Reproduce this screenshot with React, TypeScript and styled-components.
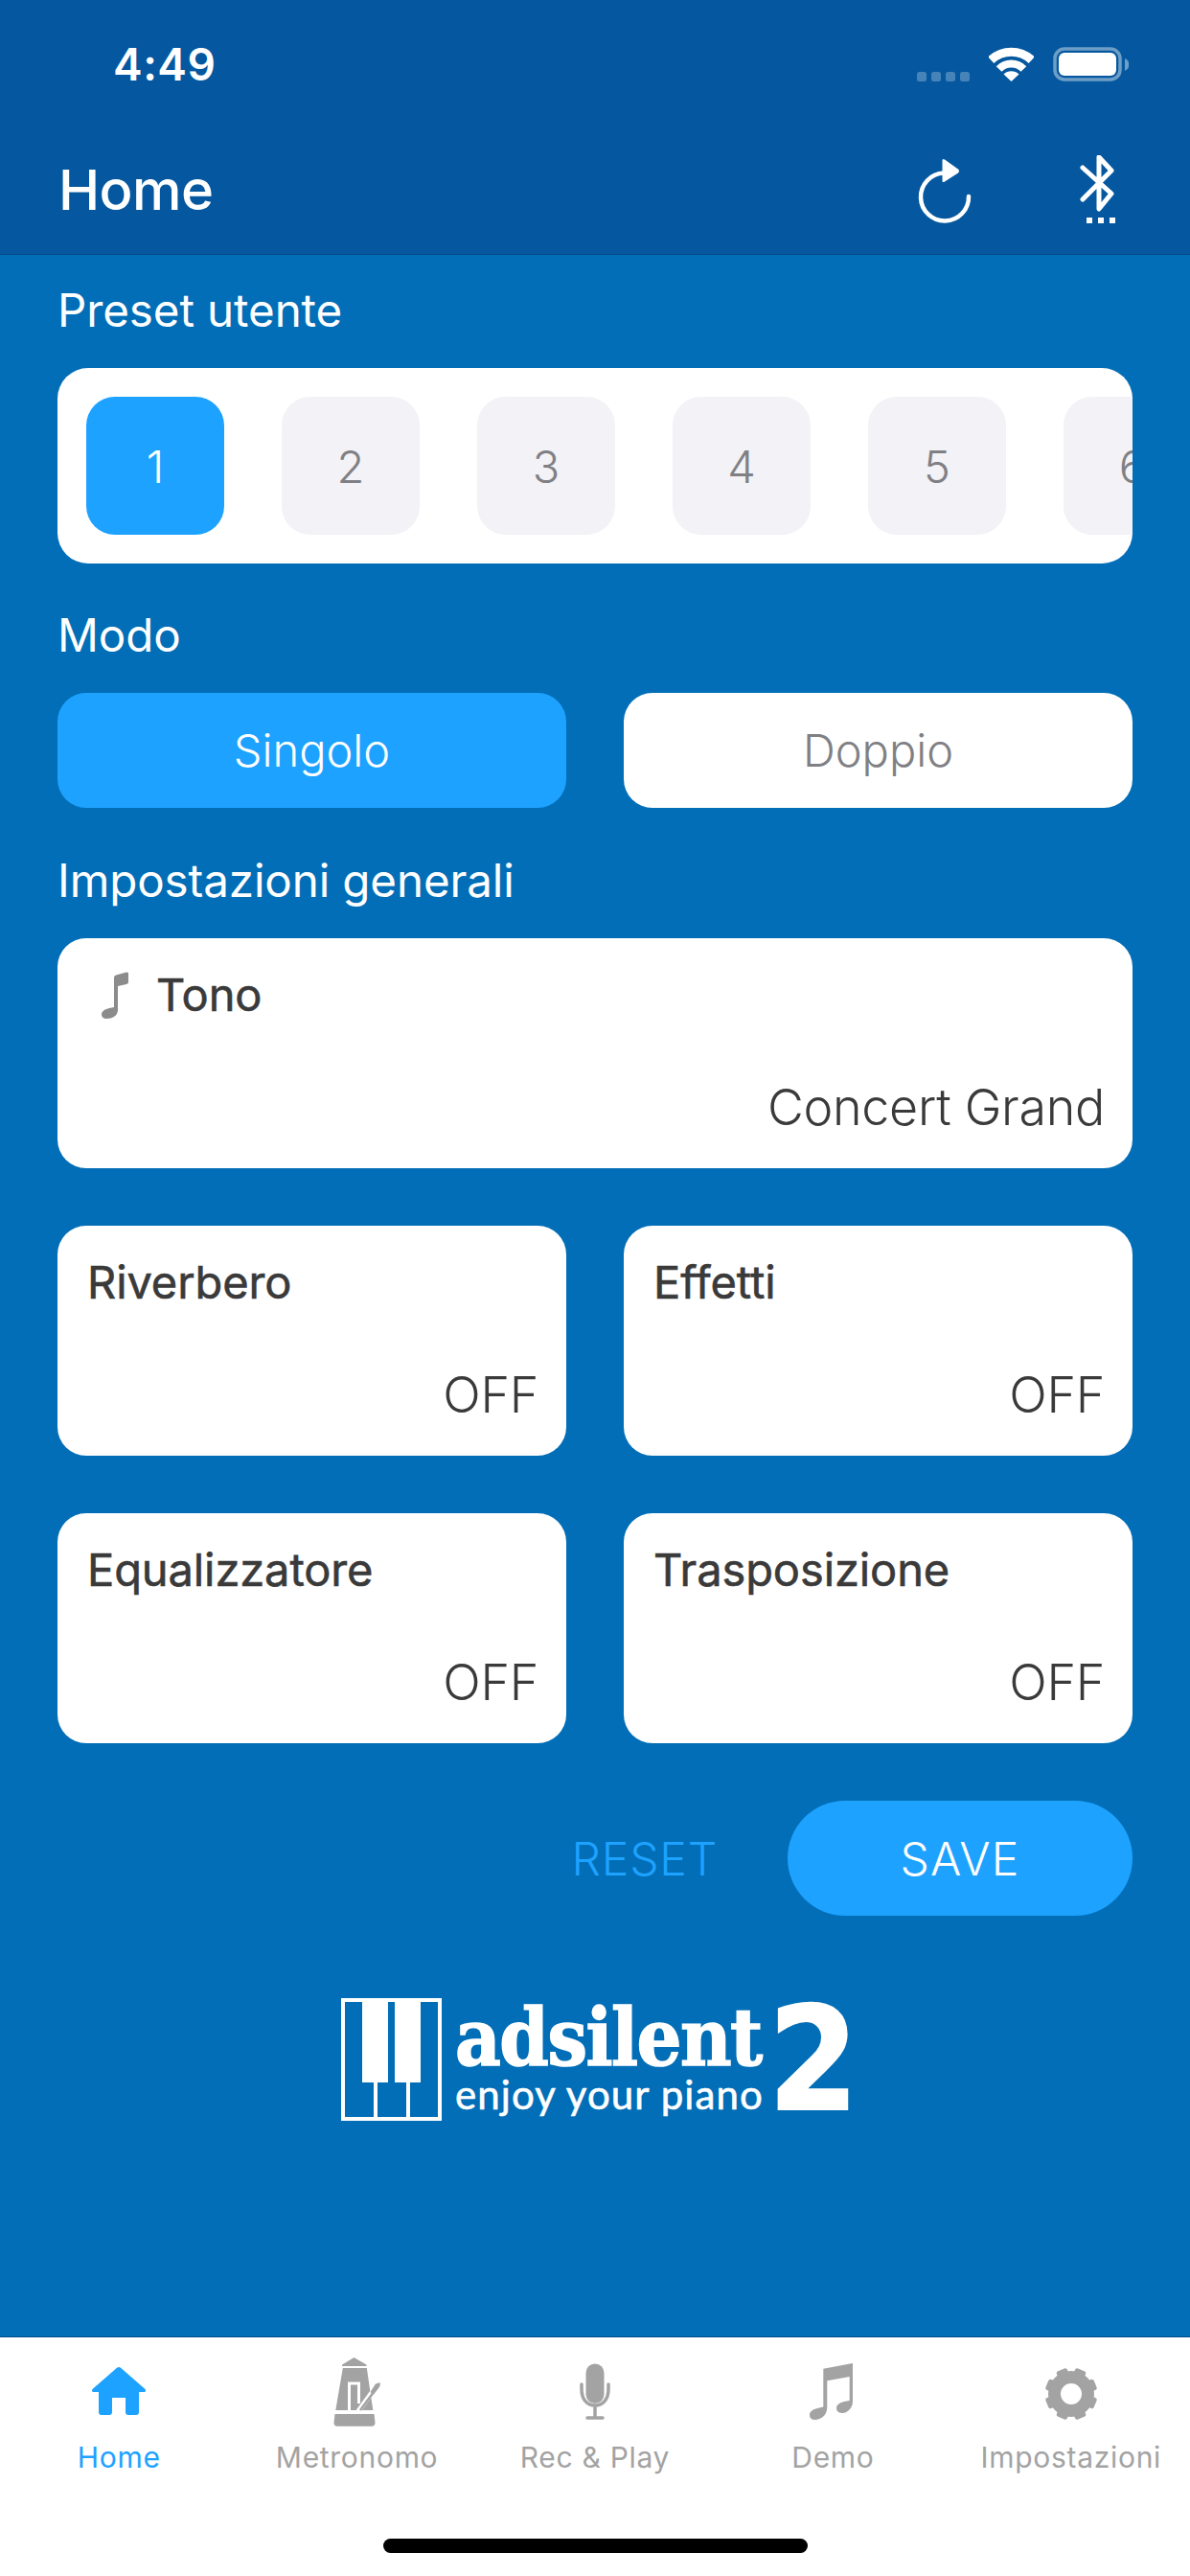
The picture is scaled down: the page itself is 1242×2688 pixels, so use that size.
import React from "react";
import styled, { createGlobalStyle } from "styled-components";

const Global = createGlobalStyle`
  html, body { margin: 0; padding: 0; background: #026eb7; }
  body { font-family: Inter, "Liberation Sans", sans-serif; -webkit-font-smoothing: antialiased; }
  * { box-sizing: border-box; }
`;

const Screen = styled.div`
  width: 1242px; height: 2688px; display: flex; flex-direction: column;
  background: #026eb7; overflow: hidden;
`;
const Header = styled.header`
  height: 266px; background: #05589f; border-bottom: 1px solid #044a86;
  display: flex; flex-direction: column;
`;
const StatusBar = styled.div`
  height: 132px; display: flex; justify-content: space-between; align-items: flex-start;
  padding: 49px 64px 0 118px;
`;
const Time = styled.span`
  color: #fff; font-size: 46px; line-height: 36px; font-weight: 600; letter-spacing: 0.5px;
`;
const StatusIcons = styled.div`
  display: flex; gap: 20px; align-items: flex-start;
`;
const NavRow = styled.div`
  flex: 1; display: flex; align-items: flex-start; justify-content: space-between;
  padding: 30px 73px 0 61px;
`;
const Title = styled.h1`
  margin: 0; color: #fff; font-size: 58px; line-height: 72px; font-weight: 500; letter-spacing: -0.6px;
`;
const NavActions = styled.div`
  display: flex; gap: 109px; align-items: flex-start;
`;
const Main = styled.main`
  flex: 1; padding: 28px 60px 0; display: flex; flex-direction: column;
`;
const Label = styled.div<{ $top?: number }>`
  color: #fff; font-size: 47.5px; line-height: 60px; font-weight: 400; letter-spacing: -0.1px;
  margin-top: ${(p) => p.$top ?? 0}px; margin-bottom: 30px;
`;
const PresetCard = styled.div`
  height: 204px; background: #fff; border-radius: 32px; padding: 30px; overflow: hidden;
  display: flex; gap: 60px;
`;
const PresetTile = styled.div<{ $active?: boolean }>`
  flex: none; width: 144px; height: 144px; border-radius: 30px;
  display: flex; align-items: center; justify-content: center;
  font-size: 47px; font-weight: 300;
  background: ${(p) => (p.$active ? "#1ea2ff" : "#f2f2f7")};
  color: ${(p) => (p.$active ? "#fff" : "#808084")};
`;
const TwoCol = styled.div<{ $top?: number }>`
  display: grid; grid-template-columns: 531px 531px; column-gap: 60px;
  margin-top: ${(p) => p.$top ?? 0}px;
`;
const ModeButton = styled.div<{ $active?: boolean }>`
  height: 120px; border-radius: 30px; display: flex; align-items: center; justify-content: center;
  font-size: 47px; font-weight: 300; padding-bottom: 2px;
  background: ${(p) => (p.$active ? "#1ea2ff" : "#fff")};
  color: ${(p) => (p.$active ? "#fff" : "#808084")};
`;
const SettingCard = styled.div`
  height: 240px; background: #fff; border-radius: 30px; padding: 26px 29px 30px 31px;
  display: flex; flex-direction: column; justify-content: space-between;
`;
const CardHead = styled.div`
  display: flex; align-items: flex-start; gap: 29px; height: 66px;
`;
const CardTitle = styled.span`
  color: #3a3a3a; font-size: 47px; line-height: 66px; font-weight: 400; letter-spacing: -0.1px;
  -webkit-text-stroke: 0.6px #3a3a3a;
`;
const NoteBox = styled.span`
  display: block; margin: 9px 0 0 15px; height: 50px;
`;
const CardValue = styled.div`
  color: #3a3a3a; font-size: 52px; line-height: 66px; font-weight: 300; text-align: right; letter-spacing: -0.3px;
`;
const Actions = styled.div`
  display: flex; justify-content: flex-end; align-items: center; gap: 73px; margin-top: 60px;
`;
const ResetLink = styled.span`
  color: #1ea2ff; font-size: 48px; font-weight: 300; letter-spacing: 0.8px;
`;
const SaveButton = styled.div`
  width: 360px; height: 120px; border-radius: 60px; background: #1ea2ff; color: #fff;
  display: flex; align-items: center; justify-content: center;
  font-size: 48px; font-weight: 300; letter-spacing: 1.2px;
`;
const Logo = styled.div`
  display: flex; align-items: flex-start; justify-content: flex-start; margin: 86px 0 0 296px; height: 128px;
`;
const LogoWords = styled.div`
  display: flex; flex-direction: column; margin-left: 14px; width: 330px; padding-top: 2px;
`;
const LogoName = styled.span`
  color: #fff; font-family: "DejaVu Serif", serif; font-stretch: condensed; font-weight: 700;
  font-size: 82px; line-height: 78px; letter-spacing: -1.5px; white-space: nowrap;
  -webkit-text-stroke: 1.5px #fff;
`;
const LogoTag = styled.span`
  color: #fff; font-family: Lato, sans-serif; font-weight: 400;
  font-size: 42px; line-height: 40px; letter-spacing: 1.1px; white-space: nowrap;
  -webkit-text-stroke: 0.6px #fff;
`;
const LogoTwo = styled.span`
  color: #fff; font-family: "DejaVu Sans", sans-serif; font-stretch: condensed; font-weight: 700;
  font-size: 150px; line-height: 128px; margin-left: -3px;
  -webkit-text-stroke: 2px #fff;
`;
const TabBar = styled.nav`
  height: 250px; background: #fff; border-top: 1px solid #00508a; padding-top: 19px;
  display: flex; flex-direction: column; align-items: center;
`;
const Tabs = styled.div`
  width: 100%; height: 126px; display: grid; grid-template-columns: repeat(5, 1fr);
`;
const Tab = styled.div<{ $active?: boolean }>`
  display: flex; flex-direction: column; align-items: center; gap: 6px;
  color: ${(p) => (p.$active ? "#1ea2ff" : "#a3a3a3")};
  font-size: 30px; line-height: 40px; font-weight: 400; white-space: nowrap; letter-spacing: 0.7px;
`;
const HomeIndicator = styled.div`
  width: 443px; height: 15px; border-radius: 8px; background: #000; margin-top: 65px;
`;

const Signal = () => (
  <svg width="55" height="36" viewBox="0 0 55 36" fill="#fff" opacity="0.26">
    {[0, 15, 30, 45].map((x) => <rect key={x} x={x} y="26" width="10" height="10" rx="2.5" />)}
  </svg>
);
const Wifi = () => (
  <svg width="47" height="36" viewBox="0 0 47 36" fill="none" stroke="#fff">
    <path d="M2.3 13.6A31 31 0 0 1 44.7 13.6" strokeWidth="9" />
    <path d="M10.6 23A18 18 0 0 1 36.4 23" strokeWidth="8" />
    <path d="M23.5 36L15.5 28.5A11.5 11.5 0 0 1 31.5 28.5Z" fill="#fff" stroke="none" />
  </svg>
);
const Battery = () => (
  <svg width="79" height="36" viewBox="0 0 79 36">
    <rect x="2" y="2" width="68" height="32" rx="10" fill="none" stroke="#fff" strokeOpacity="0.42" strokeWidth="3.5" />
    <rect x="6" y="6" width="60" height="24" rx="6" fill="#fff" />
    <path d="M75 12a7 7 0 0 1 0 13Z" fill="#fff" fillOpacity="0.42" />
  </svg>
);
const Refresh = () => (
  <svg width="64" height="72" viewBox="0 0 64 72" fill="none">
    <path d="M31 18.5A25 25 0 1 0 57 43" stroke="#fff" strokeWidth="4.5" strokeLinecap="round" />
    <path d="M29.5 5.5Q29.5 3 32 4.5L46 14.5Q48 16.5 46 18.5L32 27.5Q29.5 29 29.5 26.5Z" fill="#fff" />
  </svg>
);
const Bluetooth = () => (
  <svg width="42" height="72" viewBox="0 0 42 72" fill="none">
    <path d="M3 13L33 40L20 56V2L33 16L3 46" stroke="#fff" strokeWidth="5" strokeLinejoin="round" strokeLinecap="round" />
    <g fill="#fff"><rect x="7" y="65" width="6" height="6" /><rect x="19" y="65" width="6" height="6" /><rect x="31" y="65" width="6" height="6" /></g>
  </svg>
);
const SmallNote = () => (
  <svg width="28" height="50" viewBox="0 0 28 50" fill="#8c8c8c">
    <path d="M13 6Q13 4 15 3.500L26 .5Q28 0 28 2V11Q28 12.500 26 13L17 15V40C17 46 11 49 5 49C1 49 0 46 0 44.500C0 41 4 39 8 38L13 37Z" />
  </svg>
);
const PianoMark = () => (
  <svg width="105" height="128" viewBox="0 0 105 128">
    <rect x="2" y="2" width="101" height="124" fill="none" stroke="#fff" strokeWidth="4" />
    <rect x="22" y="2" width="27" height="86" fill="#fff" />
    <rect x="56" y="2" width="27" height="86" fill="#fff" />
    <rect x="34" y="86" width="4" height="40" fill="#fff" />
    <rect x="68" y="86" width="4" height="40" fill="#fff" />
  </svg>
);
const HomeIcon = () => (
  <svg width="80" height="80" viewBox="0 0 80 80" fill="#1ea2ff">
    <path d="M38 12.800Q40 11 42 12.800L67.500 35Q69 37.500 66.500 38H61V59Q61 62 58 62H50Q47 62 47 59V44H33V59Q33 62 30 62H22Q19 62 19 59V38H13.500Q11 37.500 12.500 35Z" />
  </svg>
);
const MetronomeIcon = () => (
  <svg width="80" height="80" viewBox="0 0 80 80" fill="#a3a3a3">
    <path d="M36.500 2L49.500 9.500V11H24V9.500Z" />
    <path d="M24.800 13H49.800L56.300 57H17.300Z" />
    <path d="M16.500 61H57.500L58.500 70Q58.500 73.700 55 73.700H19Q15.500 73.700 15.500 70Z" />
    <path d="M31.500 57V29H41.500V50" fill="none" stroke="#fff" strokeWidth="3" />
    <path d="M41 58L62 29" stroke="#fff" strokeWidth="5" />
    <path d="M43 57L63 30" stroke="#a3a3a3" strokeWidth="2.500" />
    <path d="M53.500 38L59 29.500L64 28L62.500 33.500L56.500 41Z" />
  </svg>
);
const MicIcon = () => (
  <svg width="80" height="80" viewBox="0 0 80 80" fill="#a3a3a3">
    <rect x="30.500" y="8.500" width="19" height="41.500" rx="9.500" />
    <path d="M26 30V35C26 46 32 52 40 52C48 52 54 46 54 35V30M40 52V65M32 65H48" fill="none" stroke="#a3a3a3" strokeWidth="3.500" strokeLinecap="round" />
  </svg>
);
const MusicIcon = () => (
  <svg width="80" height="80" viewBox="0 0 80 80" fill="#a3a3a3">
    <path d="M30.300 13.700L61 8V48C61 54 56 60 50 60C45.500 60 44 57 44 55C44 51 48 49 52 48L57.700 47V22L34.300 26.300V54C34.300 62 28 67 21.500 67C17 67 16 64 16 62C16 58 20 56 24 55L30.300 53.500Z" />
  </svg>
);
const GearIcon = () => (
  <svg width="80" height="80" viewBox="0 0 80 80" fill="#a3a3a3">
    <path
      fillRule="evenodd"
      d="M40 16a24 24 0 1 0 0 48a24 24 0 0 0 0-48ZM40 29a11 11 0 1 1 0 22a11 11 0 0 1 0-22Z"
    />
    {[22.5, 67.5, 112.5, 157.5, 202.5, 247.5, 292.5, 337.5].map((a) => (
      <rect key={a} x="34" y="12.800" width="12" height="10" rx="2.500" transform={`rotate(${a} 40 40)`} />
    ))}
  </svg>
);

const tiles = ["1", "2", "3", "4", "5", "6"];
const tabs = [
  { name: "Home", icon: <HomeIcon />, active: true },
  { name: "Metronomo", icon: <MetronomeIcon /> },
  { name: "Rec & Play", icon: <MicIcon /> },
  { name: "Demo", icon: <MusicIcon /> },
  { name: "Impostazioni", icon: <GearIcon /> },
];

const Setting = ({ title, value }: { title: string; value: string }) => (
  <SettingCard>
    <CardHead><CardTitle>{title}</CardTitle></CardHead>
    <CardValue>{value}</CardValue>
  </SettingCard>
);

export default function App() {
  return (
    <Screen>
      <Global />
      <Header>
        <StatusBar>
          <Time>4:49</Time>
          <StatusIcons><Signal /><Wifi /><Battery /></StatusIcons>
        </StatusBar>
        <NavRow>
          <Title>Home</Title>
          <NavActions><Refresh /><Bluetooth /></NavActions>
        </NavRow>
      </Header>
      <Main>
        <Label>Preset utente</Label>
        <PresetCard>
          {tiles.map((t, i) => <PresetTile key={t} $active={i === 0}>{t}</PresetTile>)}
        </PresetCard>
        <Label $top={45}>Modo</Label>
        <TwoCol>
          <ModeButton $active>Singolo</ModeButton>
          <ModeButton>Doppio</ModeButton>
        </TwoCol>
        <Label $top={46}>Impostazioni generali</Label>
        <SettingCard>
          <CardHead><NoteBox><SmallNote /></NoteBox><CardTitle>Tono</CardTitle></CardHead>
          <CardValue>Concert Grand</CardValue>
        </SettingCard>
        <TwoCol $top={60}>
          <Setting title="Riverbero" value="OFF" />
          <Setting title="Effetti" value="OFF" />
        </TwoCol>
        <TwoCol $top={60}>
          <Setting title="Equalizzatore" value="OFF" />
          <Setting title="Trasposizione" value="OFF" />
        </TwoCol>
        <Actions>
          <ResetLink>RESET</ResetLink>
          <SaveButton>SAVE</SaveButton>
        </Actions>
        <Logo>
          <PianoMark />
          <LogoWords>
            <LogoName>adsilent</LogoName>
            <LogoTag>enjoy your piano</LogoTag>
          </LogoWords>
          <LogoTwo>2</LogoTwo>
        </Logo>
      </Main>
      <TabBar>
        <Tabs>
          {tabs.map((t) => <Tab key={t.name} $active={t.active}>{t.icon}<span>{t.name}</span></Tab>)}
        </Tabs>
        <HomeIndicator />
      </TabBar>
    </Screen>
  );
}
